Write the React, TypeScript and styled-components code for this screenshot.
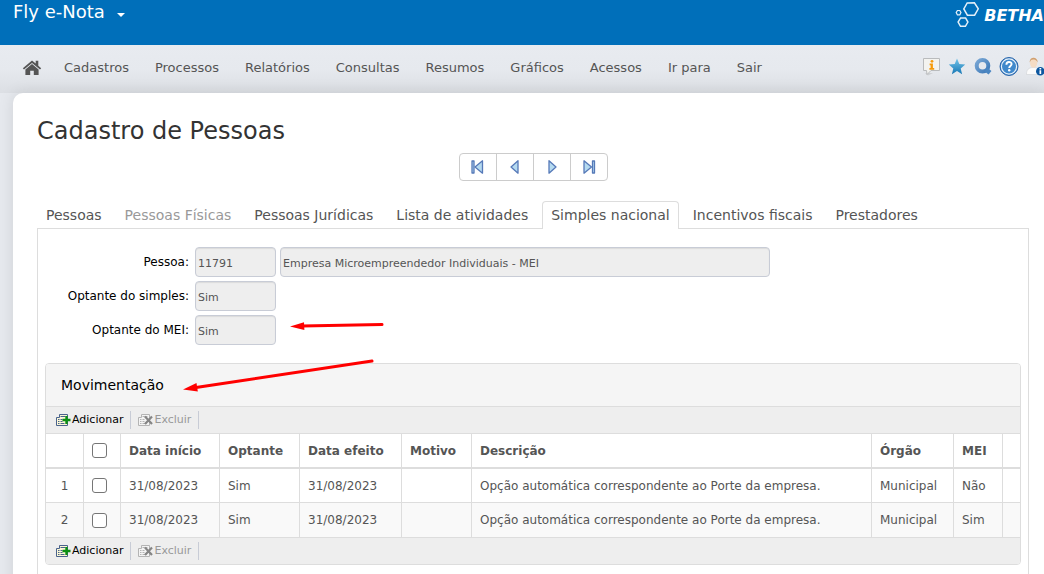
import React from 'react';
import styled, { createGlobalStyle } from 'styled-components';

const GlobalStyle = createGlobalStyle`
  * { box-sizing: border-box; }
  body {
    margin: 0;
    overflow: hidden;
    background: #e6e9ee;
    font-family: 'DejaVu Sans', Verdana, sans-serif;
    font-size: 12px;
    color: #555;
  }
  button, input { font-family: inherit; }
`;

const Page = styled.div`
  position: relative;
  display: flex;
  flex-direction: column;
  height: 100vh;
  overflow: hidden;
`;

const Header = styled.header`
  display: flex;
  flex: none;
  justify-content: space-between;
  height: 45px;
  padding-left: 13px;
  background: #006fba;
  color: #fff;
`;

const ProductButton = styled.button`
  display: flex;
  align-items: center;
  gap: 12px;
  height: 24px;
  padding: 0;
  border: 0;
  background: none;
  color: #fff;
  font-size: 18px;
  line-height: 24px;
`;

const Caret = styled.svg`
  margin-top: 6px;
`;

const Brand = styled.div`
  display: flex;
  align-items: center;
  gap: 5px;
  height: 30px;
  font-size: 16px;
  font-weight: bold;
  font-style: italic;
`;

const MenuBar = styled.nav`
  display: flex;
  flex: none;
  align-items: center;
  justify-content: space-between;
  height: 48px;
  padding-left: 22px;
  background: linear-gradient(#e8ebf0 0%, #e6e9ee 50%, #dcdfe4 100%);
`;

const MenuList = styled.div`
  display: flex;
  align-items: center;
  gap: 26px;
  padding-bottom: 3px;
`;

const MenuLink = styled.a`
  color: #555;
  font-size: 13px;
  line-height: 20px;
  text-decoration: none;
`;

const HomeLink = styled(MenuLink)`
  display: flex;
  margin-right: -4px;
`;

const Shortcuts = styled.div`
  display: flex;
  gap: 6px;
  margin-right: -1px;
  padding-bottom: 4px;
`;

const IconButton = styled.button`
  display: flex;
  padding: 0;
  border: 0;
  background: none;
`;

const Card = styled.main`
  flex: 1 0 auto;
  margin-left: 13px;
  padding: 23px 15px 0 24px;
  border-top-left-radius: 10px;
  background: #fff;
  box-shadow: 0 0 16px rgba(0, 0, 0, 0.1);
`;

const Title = styled.h1`
  margin: 0;
  color: #333;
  font-size: 24px;
  font-weight: normal;
  line-height: 30px;
`;

const Pager = styled.div`
  display: flex;
  width: fit-content;
  margin: 7px auto 20px;
  border: 1px solid #ccc;
  border-radius: 4px;
`;

const PagerButton = styled.button`
  display: flex;
  align-items: center;
  justify-content: center;
  width: 37px;
  height: 26px;
  padding: 0;
  border: 0;
  background: none;
  &:first-child { width: 36px; }
  & + & { border-left: 1px solid #ccc; }
`;

const Tabs = styled.div`
  display: flex;
  gap: 5px;
`;

const Tab = styled.button<{ $active?: boolean }>`
  height: 28px;
  margin-bottom: -1px;
  padding: 0 8px 2px;
  border: 1px solid ${p => (p.$active ? '#ddd' : 'transparent')};
  border-bottom: 0;
  border-radius: 4px 4px 0 0;
  background: ${p => (p.$active ? '#fff' : 'transparent')};
  color: #555;
  font-size: 14px;
  line-height: 24px;
  white-space: nowrap;
  z-index: 1;
  &:disabled { color: #999; }
`;

const TabPanel = styled.section`
  padding: 18px 7px 40px;
  border: 1px solid #ddd;
`;

const Form = styled.form`
  display: flex;
  flex-direction: column;
  gap: 4px;
`;

const Field = styled.div`
  display: flex;
  gap: 4px;
`;

const Label = styled.label`
  width: 146px;
  padding: 1px 2px 0 0;
  color: #000;
  line-height: 29px;
  text-align: right;
`;

const TextInput = styled.input<{ $wide?: boolean }>`
  width: ${p => (p.$wide ? '490px' : '81px')};
  height: 30px;
  padding: 3px 2px 0;
  border: 1px solid #c8ccd6;
  border-radius: 4px;
  background: #eee;
  box-shadow: inset 0 1px 1px rgba(0, 0, 0, 0.08);
  color: #555;
  font-size: 11px;
`;

const Grid = styled.div`
  margin-top: 18px;
  border: 1px solid #ddd;
  border-radius: 4px;
  overflow: hidden;
`;

const GridTitle = styled.h2`
  margin: 0;
  padding: 1px 15px 0;
  background: #f5f5f5;
  color: #000;
  font-size: 14px;
  font-weight: normal;
  line-height: 41px;
`;

const Toolbar = styled.div`
  display: flex;
  align-items: center;
  height: 27px;
  padding: 0 2px 1px 10px;
  background: #eee;
  border-top: 1px solid #ddd;
`;

const ToolButton = styled.button`
  display: flex;
  align-items: center;
  gap: 1px;
  height: 18px;
  margin-right: 7px;
  padding: 0 7px 0 0;
  border: 0;
  border-right: 1px solid #c8ccd6;
  background: none;
  color: #000;
  font-size: 11px;
  &:disabled { color: #999; }
`;

const Table = styled.table`
  width: 100%;
  table-layout: fixed;
  border-collapse: separate;
  border-spacing: 0;
  background: #fff;
`;

const Col = styled.col<{ $w?: number }>`
  width: ${p => (p.$w ? `${p.$w}px` : 'auto')};
`;

const Cell = styled.td<{ $center?: boolean }>`
  height: 34px;
  padding: 0 8px;
  border-right: 1px solid #ddd;
  border-bottom: 1px solid #ddd;
  text-align: ${p => (p.$center ? 'center' : 'left')};
  white-space: nowrap;
  &:last-child { border-right: 0; }
`;

const HeadCell = styled(Cell)`
  height: 36px;
  border-top: 1px solid #ddd;
  border-bottom-width: 2px;
  font-weight: bold;
`;

const Row = styled.tr<{ $shaded?: boolean }>`
  background: ${p => (p.$shaded ? '#f9f9f9' : '#fff')};
  &:last-child td { border-bottom: 0; }
`;

const Check = styled.input`
  display: block;
  width: 15px;
  height: 15px;
  margin: 0;
  appearance: none;
  border: 1px solid #767676;
  border-radius: 3px;
  background: #fff;
`;

const Annotation = styled.svg`
  position: absolute;
  left: 180px;
  top: 310px;
  pointer-events: none;
`;

const HomeIcon = () => (
  <svg width="20" height="16" viewBox="0 0 20 16" fill="#555">
    <path d="M10 .4.8 8.200l1.200 1.400L10 2.900l8 6.700 1.200-1.400-2.900-2.400V.8h-2.600v2.700z" />
    <path d="M10 4 3.400 9.500V15h4.800v-4.300h3.600V15h4.800V9.500z" />
  </svg>
);

const MessageIcon = () => (
  <svg width="20" height="20" viewBox="0 0 20 20">
    <path d="M4 16h8l-5 2.500z" fill="#b5b7b9" opacity=".5" />
    <path d="M2.500 1.500h16v12H10l-4 4-.5-4h-3z" fill="#f3f3f0" stroke="#b9bbbd" />
    <circle cx="11" cy="4.300" r="1.400" fill="#f59a0b" />
    <path d="M8.600 6.600h3.300v4.400h1.300v1.700H8.400V11h1.200V8.200h-1z" fill="#f59a0b" />
  </svg>
);

const StarIcon = () => (
  <svg width="20" height="20" viewBox="0 0 20 20">
    <defs>
      <linearGradient id="star" x1="0" y1="0" x2="0" y2="1">
        <stop offset="0" stopColor="#74c4e8" />
        <stop offset="1" stopColor="#1677b5" />
      </linearGradient>
    </defs>
    <path d="m10 1.600 2.300 5.400 5.900.500-4.500 3.900 1.400 5.800-5.100-3.100-5.100 3.100 1.400-5.800-4.500-3.900 5.900-.5z" fill="url(#star)" />
  </svg>
);

const SearchIcon = () => (
  <svg width="20" height="20" viewBox="0 0 20 20" fill="none">
    <defs>
      <linearGradient id="lens" x1="0" y1="0" x2="1" y2="1">
        <stop offset="0" stopColor="#78a6d4" />
        <stop offset="1" stopColor="#3d79b8" />
      </linearGradient>
    </defs>
    <circle cx="9.500" cy="8.800" r="5.800" stroke="url(#lens)" strokeWidth="4" />
    <path d="m12.800 12.400 4.200 3.400" stroke="#4a86c2" strokeWidth="4.600" />
  </svg>
);

const HelpIcon = () => (
  <svg width="20" height="20" viewBox="0 0 20 20" fill="none">
    <circle cx="10" cy="9.500" r="9" fill="#2c75bd" stroke="#2a66ab" />
    <circle cx="10" cy="9.500" r="7.600" fill="#4089cc" stroke="#e9f2fa" strokeWidth="1.200" />
    <path d="M7.400 7.700c0-3.600 5.200-3.400 5.200-.6 0 1.800-2.400 1.900-2.400 3.900" stroke="#fff" strokeWidth="1.900" />
    <circle cx="10.200" cy="13.300" r="1.200" fill="#fff" />
  </svg>
);

const UserIcon = () => (
  <svg width="20" height="20" viewBox="0 0 20 20">
    <path d="M1.500 17.500c0-5 2-7 7-7s7 2 7 7z" fill="#fbfbfb" stroke="#d3d5d8" strokeWidth=".7" />
    <ellipse cx="8.600" cy="5.800" rx="3.600" ry="5" fill="#f5dcc4" />
    <path d="M4.800 5.500C3.800-.8 12.800-1 12.800 5.500 11.500 3 9.500 2.600 8.200 2.600 6 2.800 5.600 3.600 4.800 5.500z" fill="#d0a070" />
    <circle cx="15.300" cy="14.300" r="4.300" fill="#0d57a0" />
    <path d="M14.500 13.300h1.700v3.700h-1.700zM14.500 11.100h1.700v1.400h-1.700z" fill="#fff" />
  </svg>
);

const BrandMark = () => (
  <svg width="24" height="28" viewBox="0 0 24 28" fill="none" stroke="#e4f0f9">
    <path d="m12.200 1.900 7.200-.1 3.900 6-3.700 6.400h-7.200L8.800 8z" strokeWidth="1.500" />
    <path d="M5.600 16.900h5l2.300 4.200-2.500 4.200H5.500L3.100 21z" strokeWidth="1.500" />
    <path d="M2.400 9.500h2.400L6 11.600l-1.200 2.200H2.400l-1.200-2.200z" strokeWidth="1.200" />
  </svg>
);

const pagerShapes = {
  first: ['M2 2h2v12H2z', 'M12.500 1.800v12.400L5 8z'],
  previous: ['M11 1.800v12.400L4 8z'],
  next: ['M5 1.800v12.400L12 8z'],
  last: ['M11.500 2h2v12h-2z', 'M3 1.800v12.400L10.500 8z'],
};

const PagerIcon = ({ kind }: { kind: keyof typeof pagerShapes }) => (
  <svg width="16" height="16" viewBox="0 0 16 16">
    {pagerShapes[kind].map(d => (
      <path key={d} d={d} fill="#b5daf0" stroke="#5679b8" strokeWidth="1.300" strokeLinejoin="round" />
    ))}
  </svg>
);

const SheetIcon = ({ kind }: { kind: 'add' | 'remove' }) => {
  const ink = kind === 'add' ? '#49628c' : '#b4b4b4';
  return (
    <svg width="15" height="14" viewBox="0 0 15 14" fill="none">
      <path d="M3.500 1.500h8v11h-11v-8h3z" fill={kind === 'add' ? '#fbf7d5' : '#f4f4f4'} stroke={ink} />
      <path d="M4.500 3.500h5M2 6.500h1.500M4.500 6.500h2M2 8.500h1.500M4.500 8.500h2M2 10.500h1.500M4.500 10.500h4" stroke={ink} />
      {kind === 'add' ? (
        <path d="M10.500 3v8M6.500 7h8" stroke="#0b8f13" strokeWidth="2.400" />
      ) : (
        <path d="m7 3.500 7 7.500M14 3.500 7 11" stroke="#858585" strokeWidth="2.200" />
      )}
    </svg>
  );
};

const GridToolbar = () => (
  <Toolbar>
    <ToolButton type="button"><SheetIcon kind="add" />Adicionar</ToolButton>
    <ToolButton type="button" disabled><SheetIcon kind="remove" />Excluir</ToolButton>
  </Toolbar>
);

const menu = ['Cadastros', 'Processos', 'Relatórios', 'Consultas', 'Resumos', 'Gráficos', 'Acessos', 'Ir para', 'Sair'];
const tabs = ['Pessoas', 'Pessoas Físicas', 'Pessoas Jurídicas', 'Lista de atividades', 'Simples nacional', 'Incentivos fiscais', 'Prestadores'];
const shortcuts = [
  { label: 'Mensagens', Icon: MessageIcon },
  { label: 'Favoritos', Icon: StarIcon },
  { label: 'Pesquisar', Icon: SearchIcon },
  { label: 'Ajuda', Icon: HelpIcon },
  { label: 'Usuário', Icon: UserIcon },
];
const pager = [
  { kind: 'first', label: 'Primeiro' },
  { kind: 'previous', label: 'Anterior' },
  { kind: 'next', label: 'Próximo' },
  { kind: 'last', label: 'Último' },
] as const;
const columns = ['Data início', 'Optante', 'Data efeito', 'Motivo', 'Descrição', 'Órgão', 'MEI', ''];
const widths = [38, 37, 99, 80, 102, 70, undefined, 82, 49, 17];
const description = 'Opção automática correspondente ao Porte da empresa.';
const rows = [
  ['31/08/2023', 'Sim', '31/08/2023', '', description, 'Municipal', 'Não', ''],
  ['31/08/2023', 'Sim', '31/08/2023', '', description, 'Municipal', 'Sim', ''],
];

export default function App() {
  return (
    <Page>
      <GlobalStyle />
      <Header>
        <ProductButton type="button">
          Fly e-Nota
          <Caret width="8" height="4" viewBox="0 0 8 4"><path d="M0 0h8L4 4z" fill="#fff" /></Caret>
        </ProductButton>
        <Brand><BrandMark />BETHA</Brand>
      </Header>
      <MenuBar>
        <MenuList>
          <HomeLink href="#" aria-label="Início"><HomeIcon /></HomeLink>
          {menu.map(item => <MenuLink key={item} href="#">{item}</MenuLink>)}
        </MenuList>
        <Shortcuts>
          {shortcuts.map(({ label, Icon }) => (
            <IconButton key={label} type="button" aria-label={label}><Icon /></IconButton>
          ))}
        </Shortcuts>
      </MenuBar>
      <Card>
        <Title>Cadastro de Pessoas</Title>
        <Pager>
          {pager.map(({ kind, label }) => (
            <PagerButton key={kind} type="button" aria-label={label}><PagerIcon kind={kind} /></PagerButton>
          ))}
        </Pager>
        <Tabs role="tablist">
          {tabs.map(tab => (
            <Tab
              key={tab}
              type="button"
              role="tab"
              aria-selected={tab === 'Simples nacional'}
              $active={tab === 'Simples nacional'}
              disabled={tab === 'Pessoas Físicas'}
            >
              {tab}
            </Tab>
          ))}
        </Tabs>
        <TabPanel role="tabpanel">
          <Form>
            <Field>
              <Label htmlFor="pessoa">Pessoa:</Label>
              <TextInput id="pessoa" readOnly value="11791" />
              <TextInput $wide aria-label="Nome da pessoa" readOnly value="Empresa Microempreendedor Individuais - MEI" />
            </Field>
            <Field>
              <Label htmlFor="simples">Optante do simples:</Label>
              <TextInput id="simples" readOnly value="Sim" />
            </Field>
            <Field>
              <Label htmlFor="mei">Optante do MEI:</Label>
              <TextInput id="mei" readOnly value="Sim" />
            </Field>
          </Form>
          <Grid>
            <GridTitle>Movimentação</GridTitle>
            <GridToolbar />
            <Table>
              <colgroup>{widths.map((w, i) => <Col key={i} $w={w} />)}</colgroup>
              <thead>
                <tr>
                  <HeadCell as="th" />
                  <HeadCell as="th"><Check type="checkbox" aria-label="Selecionar todos" /></HeadCell>
                  {columns.map((c, i) => <HeadCell as="th" key={i}>{c}</HeadCell>)}
                </tr>
              </thead>
              <tbody>
                {rows.map((row, r) => (
                  <Row key={r} $shaded={r % 2 === 1}>
                    <Cell $center>{r + 1}</Cell>
                    <Cell><Check type="checkbox" aria-label={`Selecionar linha ${r + 1}`} /></Cell>
                    {row.map((value, i) => <Cell key={i}>{value}</Cell>)}
                  </Row>
                ))}
              </tbody>
            </Table>
            <GridToolbar />
          </Grid>
        </TabPanel>
      </Card>
      <Annotation width="210" height="90" viewBox="0 0 210 90" fill="#f00" stroke="#f00" aria-hidden="true">
        <path d="M122 16 202 14.500" strokeWidth="3" strokeLinecap="round" />
        <path d="m110 16.500 14-4.200.4 7.800z" stroke="none" />
        <path d="M16 77.500 192 51" strokeWidth="3" strokeLinecap="round" />
        <path d="m3 79.500 13.500-6.400 1.300 8.400z" stroke="none" />
      </Annotation>
    </Page>
  );
}
